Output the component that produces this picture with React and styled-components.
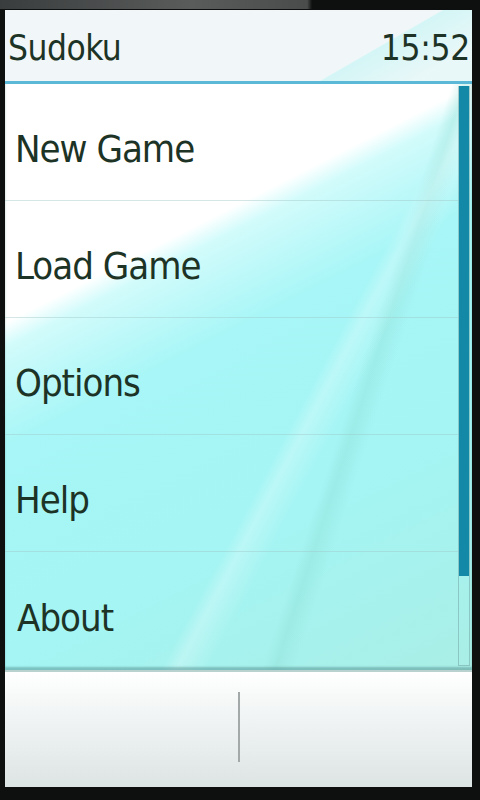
import React from 'react';
import styled, { createGlobalStyle } from 'styled-components';

const Global = createGlobalStyle`
  html, body {
    margin: 0;
    padding: 0;
    background: #0e0f0f;
  }
  body {
    width: 480px;
    height: 800px;
    overflow: hidden;
    font-family: "Liberation Sans Narrow", "DejaVu Sans Condensed", "Liberation Sans", sans-serif;
  }
`;

const Device = styled.div`
  width: 480px;
  height: 800px;
  padding-top: 10px;
  box-sizing: border-box;
  background: linear-gradient(90deg, #3a3d3d 0, #5a5c5c 40%, #4a4c4c 64%, #0e0f0f 65%) top / 100% 9px no-repeat, #0e0f0f;
`;

const Screen = styled.div`
  margin-left: 5px;
  width: 467px;
  height: 777px;
  display: flex;
  flex-direction: column;
  background: #fff;
`;

const Header = styled.header`
  height: 74px;
  display: flex;
  align-items: center;
  justify-content: space-between;
  padding: 4px 2px 0 3px;
  box-sizing: border-box;
  background:
    linear-gradient(150deg, transparent 0, transparent 74%, rgba(200, 245, 245, 0.7) 74.5%, rgba(220, 248, 248, 0.4) 90%),
    #f1f7f8;
  border-bottom: 3px solid #5bb8d6;
`;

const Title = styled.span`
  font-size: 35px;
  color: #1c3326;
  letter-spacing: -0.5px;
`;

const Clock = styled.span`
  font-size: 35px;
  color: #1c3326;
  letter-spacing: -0.3px;
`;

const ListArea = styled.div`
  position: relative;
  flex: 1;
  display: flex;
  background:
    linear-gradient(118deg, transparent 0, transparent 60%, rgba(255, 255, 255, 0.25) 62%, transparent 66%),
    linear-gradient(108deg, transparent 0, transparent 68%, rgba(140, 220, 210, 0.35) 70%, transparent 73%),
    linear-gradient(153deg, #ffffff 0, #ffffff 29%, #d2fbfb 32%, #a8f6f7 44%, #a4f5f4 70%, #a9eee6 100%);
  box-shadow: inset 0 -3px 2px rgba(70, 130, 130, 0.45);
`;

const List = styled.ul`
  list-style: none;
  margin: 0;
  padding: 0;
  flex: 1;
  display: flex;
  flex-direction: column;
`;

const Item = styled.li`
  height: 117px;
  display: flex;
  align-items: center;
  padding: 14px 0 0 ${p => (p.$nudge ? 12 : 10)}px;
  font-size: 38px;
  letter-spacing: -1px;
  color: #1c3326;
  border-bottom: ${p => (p.$last ? 'none' : '1px solid rgba(160, 200, 200, 0.45)')};
  box-sizing: border-box;
`;

const Scroll = styled.div`
  width: 10px;
  margin: 2px 2px 4px 0;
  display: flex;
  flex-direction: column;
  border: 1px solid rgba(110, 160, 160, 0.5);
  border-top: none;
`;

const Thumb = styled.div`
  height: 490px;
  background: #1489a7;
`;

const Softkeys = styled.footer`
  height: 115px;
  display: flex;
  align-items: center;
  justify-content: center;
  background: linear-gradient(180deg, #ffffff 0, #f2f5f5 35%, #dde4e4 100%);
  border-top: 2px solid #b9d2d0;
`;

const Divider = styled.div`
  width: 2px;
  height: 70px;
  background: #a3a9a8;
  margin-bottom: 6px;
`;

const items = ['New Game', 'Load Game', 'Options', 'Help', 'About'];

export default function App() {
  return (
    <>
      <Global />
      <Device>
        <Screen>
          <Header>
            <Title>Sudoku</Title>
            <Clock>15:52</Clock>
          </Header>
          <ListArea>
            <List>
              {items.map((label, i) => (
                <Item key={label} $last={i === items.length - 1} $nudge={label === 'About'}>
                  {label}
                </Item>
              ))}
            </List>
            <Scroll>
              <Thumb />
            </Scroll>
          </ListArea>
          <Softkeys>
            <Divider />
          </Softkeys>
        </Screen>
      </Device>
    </>
  );
}
